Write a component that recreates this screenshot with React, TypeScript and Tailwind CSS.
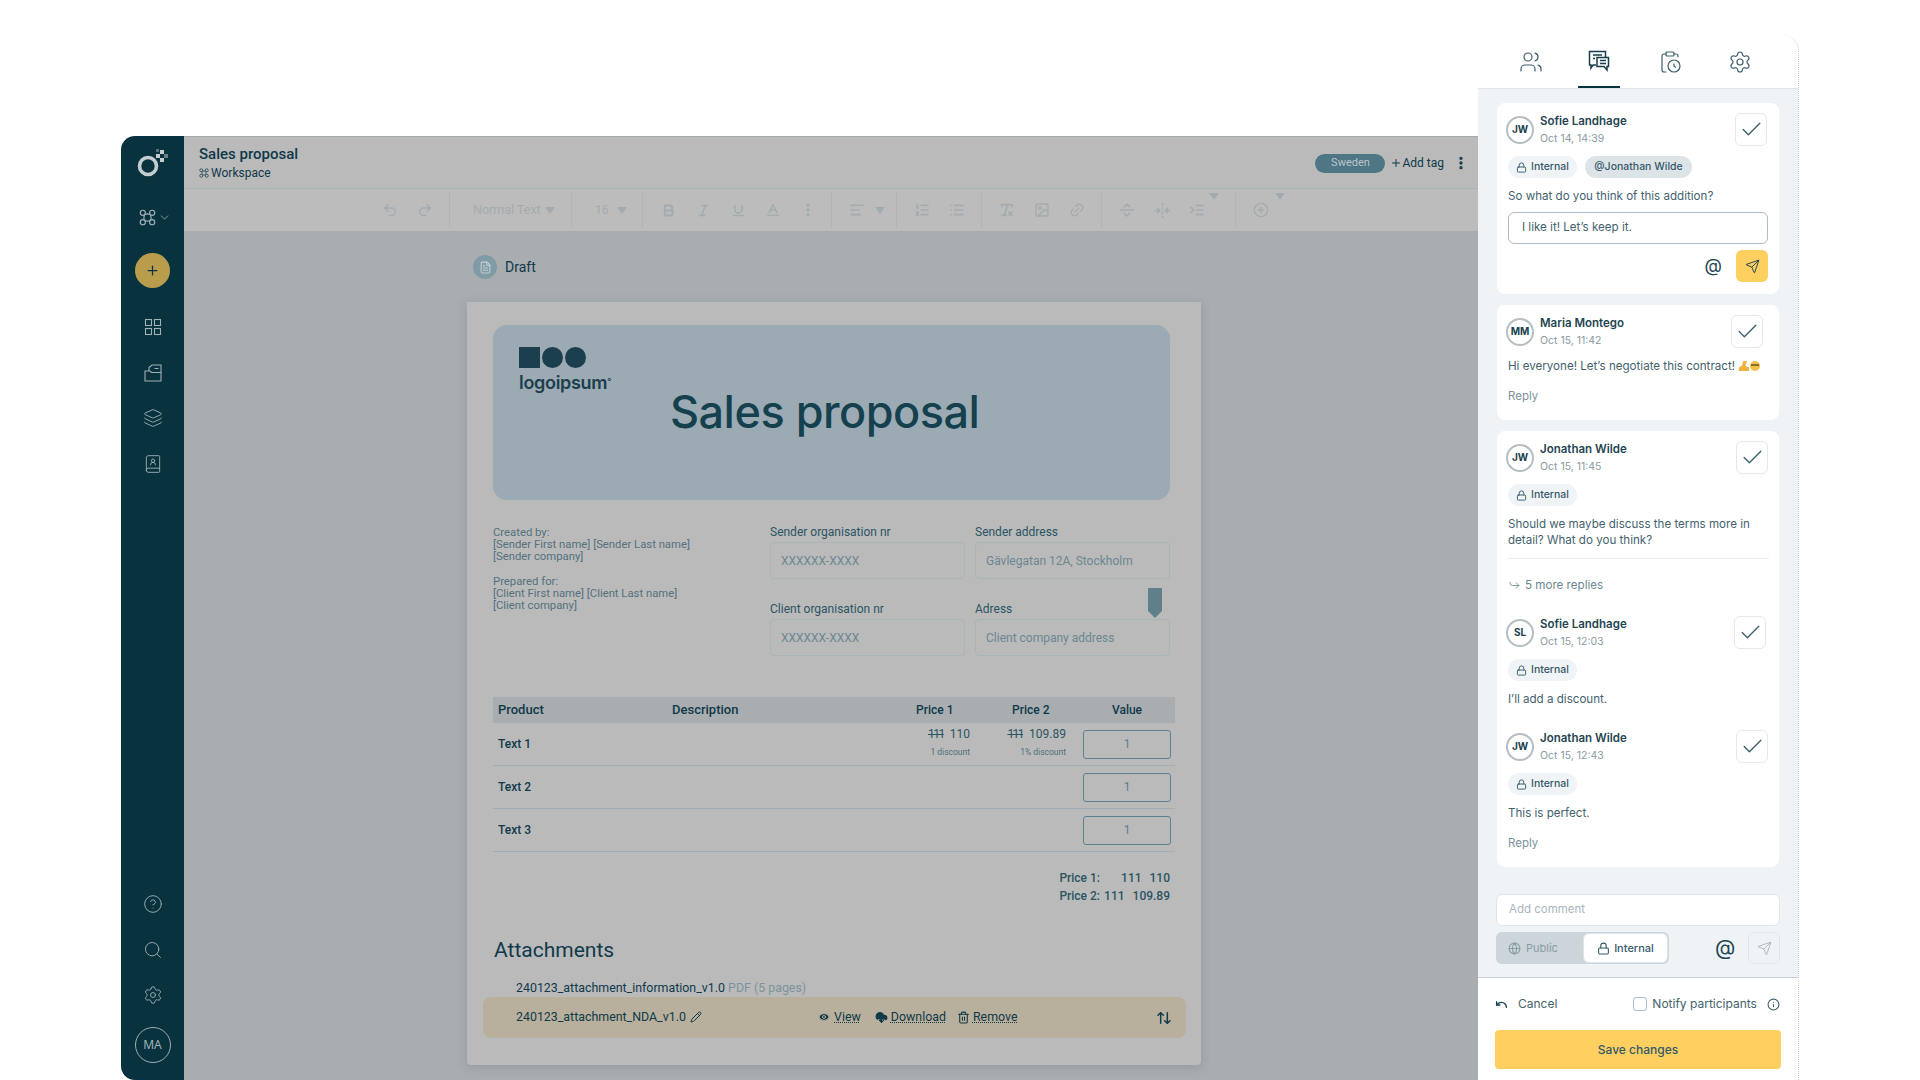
import type { ReactNode } from 'react'
import {
  AlignLeft, ArrowUpDown, Baseline, Bold, BookUser, Check, CircleHelp, CirclePlus, ClipboardClock,
  CloudDownload, ChevronDown, EllipsisVertical, Eye, FileText, FoldHorizontal, Forward,
  Globe, Image, IndentIncrease, Info, Italic, Layers, Link2, List, ListOrdered, Lock,
  Pencil, Plus, Redo2, RemoveFormatting, Search, Send, SeparatorHorizontal, Settings,
  Trash2, Underline, Undo, Undo2, Users,
} from 'lucide-react'

function WorkspaceIcon({ size, className }: { size: number; className?: string }) {
  return (
    <svg width={size} height={size} viewBox="0 0 20 20" fill="none" stroke="currentColor" strokeWidth="1.4" className={className}>
      <circle cx="4.5" cy="4.5" r="3" />
      <circle cx="15.5" cy="4.5" r="3" />
      <circle cx="4.5" cy="15.5" r="3" />
      <circle cx="15.5" cy="15.5" r="3" />
      <path d="M7 6.5q3-1.5 6 0M7 13.5q3 1.5 6 0M6.500 7q-1.500 3 0 6M13.500 7q1.500 3 0 6" />
    </svg>
  )
}

function AppLogo() {
  return (
    <svg width="32" height="28" viewBox="0 0 32 28" fill="none">
      <circle cx="11" cy="17" r="8.5" stroke="#c5cdd0" strokeWidth="3.6" />
      <g fill="#c5cdd0">
        <rect x="23" y="1" width="4" height="4" />
        <rect x="19" y="5" width="4" height="4" />
        <rect x="27" y="5" width="4" height="4" opacity="0.5" />
        <rect x="23" y="9" width="4" height="4" />
        <rect x="19" y="0" width="3" height="3" opacity="0.4" />
      </g>
    </svg>
  )
}

function GridIcon() {
  return (
    <svg width="20" height="20" viewBox="0 0 20 20" fill="none" stroke="currentColor" strokeWidth="1.1">
      <rect x="2.500" y="2.500" width="6" height="6" />
      <rect x="11.500" y="2.500" width="6" height="6" />
      <rect x="2.500" y="11.500" width="6" height="6" />
      <rect x="11.500" y="11.500" width="6" height="6" />
    </svg>
  )
}

function FolderFilesIcon() {
  return (
    <svg width="20" height="20" viewBox="0 0 20 20" fill="none" stroke="currentColor" strokeWidth="1.1">
      <path d="M2 18V8h5l1.500 1.500H18V18z" />
      <path d="M6 8V4.500L9 2h9v7.500M11.500 5.500h4" />
    </svg>
  )
}

function CommentsIcon() {
  return (
    <svg width="24" height="24" viewBox="0 0 24 24" fill="none" stroke="currentColor" strokeWidth="1.5">
      <path d="M9 16H6l-2 3v-3H2.500V2.500h16V8" />
      <path d="M10 8.500h11.500v9H20V21l-3-3.500h-7z" />
      <path d="M6 6h9M6 9.500h2M13 11.500h6M13 14.500h6" />
    </svg>
  )
}

function ToolIcon({ children }: { children: ReactNode }) {
  return <span className="flex w-[35px] justify-center text-[#a3abaf]">{children}</span>
}

function Caret() {
  return <span className="h-0 w-0 border-x-[5px] border-t-[7px] border-x-transparent border-t-[#a3abaf]" />
}

function ToolGroup({ className, children }: { className: string; children: ReactNode }) {
  return <div className={`flex h-[36px] items-center border-r border-[#aeb4b7] ${className}`}>{children}</div>
}

function Toolbar() {
  return (
    <div className="flex h-[42px] items-center bg-[#bcbcbc] pl-[188px]">
      <ToolGroup className="w-[78px] pl-[0.5px]">
        <ToolIcon><Undo2 size={16} /></ToolIcon>
        <ToolIcon><Redo2 size={16} /></ToolIcon>
      </ToolGroup>
      <ToolGroup className="w-[122px] pl-[23px]">
        <span className="w-[72px] text-[12.5px] text-[#a3abaf]">Normal Text</span>
        <Caret />
      </ToolGroup>
      <ToolGroup className="w-[71px] pl-[23px]">
        <span className="w-[22px] text-[12px] text-[#a3abaf]">16</span>
        <Caret />
      </ToolGroup>
      <ToolGroup className="w-[189px] pl-[7.5px]">
        <ToolIcon><Bold size={15} strokeWidth={3} /></ToolIcon>
        <ToolIcon><Italic size={15} strokeWidth={2.5} /></ToolIcon>
        <ToolIcon><Underline size={15} strokeWidth={2.5} /></ToolIcon>
        <ToolIcon><Baseline size={16} strokeWidth={2} /></ToolIcon>
        <ToolIcon><EllipsisVertical size={16} strokeWidth={3} /></ToolIcon>
      </ToolGroup>
      <ToolGroup className="w-[65px] pl-[7.5px]">
        <ToolIcon><AlignLeft size={16} strokeWidth={2.5} /></ToolIcon>
        <Caret />
      </ToolGroup>
      <ToolGroup className="w-[85px] pl-[7.5px]">
        <ToolIcon><ListOrdered size={16} strokeWidth={2.5} /></ToolIcon>
        <ToolIcon><List size={16} strokeWidth={2.5} /></ToolIcon>
      </ToolGroup>
      <ToolGroup className="w-[120px] pl-[7.5px]">
        <ToolIcon><RemoveFormatting size={16} strokeWidth={2.5} /></ToolIcon>
        <ToolIcon><Image size={16} /></ToolIcon>
        <ToolIcon><Link2 size={16} className="-rotate-45" /></ToolIcon>
      </ToolGroup>
      <ToolGroup className="w-[134px] pl-[7.5px]">
        <ToolIcon><SeparatorHorizontal size={18} /></ToolIcon>
        <ToolIcon><FoldHorizontal size={17} /></ToolIcon>
        <ToolIcon><IndentIncrease size={16} strokeWidth={2.5} /></ToolIcon>
        <span className="-ml-[6px]"><Caret /></span>
      </ToolGroup>
      <div className="flex items-center pl-[7.5px]">
        <ToolIcon><CirclePlus size={16} /></ToolIcon>
        <span className="-ml-[4px]"><Caret /></span>
      </div>
    </div>
  )
}

function Sidebar() {
  return (
    <aside className="flex w-[63px] shrink-0 flex-col items-center rounded-tl-[14px] rounded-bl-[14px] bg-[#09323f] pt-[13px] pb-[17px] text-[#9fb0b6]">
      <AppLogo />
      <div className="mt-[30px] flex h-[20px] items-center gap-[2px] pl-1">
        <WorkspaceIcon size={17} />
        <ChevronDown size={13} strokeWidth={1.5} />
      </div>
      <div className="mt-[26px] flex h-[35px] w-[35px] items-center justify-center rounded-full bg-[#b99d4d] text-[#09323f]">
        <Plus size={15} />
      </div>
      <div className="mt-[29px] flex flex-col gap-[25.5px]">
        <GridIcon />
        <FolderFilesIcon />
        <Layers size={20} strokeWidth={1.1} />
        <BookUser size={20} strokeWidth={1.1} />
      </div>
      <div className="mt-auto flex flex-col gap-[25.5px]">
        <CircleHelp size={20} strokeWidth={1.1} />
        <Search size={20} strokeWidth={1.1} />
        <Settings size={20} strokeWidth={1.1} />
      </div>
      <div className="mt-[22px] flex h-[36px] w-[36px] items-center justify-center rounded-full border border-[#9fb0b6] text-[12px]">MA</div>
    </aside>
  )
}

function Field({ label, value, children }: { label: string; value: string; children?: ReactNode }) {
  return (
    <div className="relative">
      <div className="text-[12px] leading-[14px] text-[#2b5563]">{label}</div>
      <div className="mt-[3px] flex h-[37px] items-center rounded-[4px] border border-[#a9b4b9] px-[10px] text-[12px] text-[#6c8792]">{value}</div>
      {children}
    </div>
  )
}

const rows = ['Text 1', 'Text 2', 'Text 3']
const gridCols = 'grid grid-cols-[179px_228px_75px_96px_104px] items-center'

function PriceCell({ value, note }: { value: string; note: string }) {
  return (
    <div className="pr-[5px] pb-[4px] text-right leading-[14px]">
      <div className="text-[12px] text-[#2b5563]"><span className="mr-[6px] tracking-[-1.5px] line-through">111</span>{value}</div>
      <div className="mt-[6px] text-[8.5px] leading-[10px] text-[#4f6f7b]">{note}</div>
    </div>
  )
}

function ProductTable() {
  return (
    <div className="mt-[41px] -mr-[5px] text-[12px] text-[#10394a]">
      <div className={`${gridCols} h-[26px] bg-[#a9adb0] font-medium`}>
        <span className="pl-[5px] text-[13px]">Product</span>
        <span className="text-[13px]">Description</span>
        <span className="pl-[16px]">Price 1</span>
        <span className="pl-[37px]">Price 2</span>
        <span className="ml-[12px] w-[88px] text-center">Value</span>
      </div>
      {rows.map((name, i) => (
        <div key={name} className={`${gridCols} h-[43px] border-b border-[#a0adb3]`}>
          <span className="pl-[5px] font-medium">{name}</span>
          <span />
          {i === 0 ? (
            <>
              <PriceCell value="110" note="1 discount" />
              <PriceCell value="109.89" note="1% discount" />
            </>
          ) : (
            <>
              <span />
              <span />
            </>
          )}
          <div className="ml-[12px] flex h-[29px] w-[88px] items-center justify-center rounded-[3px] border border-[#5f8290] text-[12px] text-[#5f7f8b]">1</div>
        </div>
      ))}
    </div>
  )
}

function Attachments() {
  return (
    <div>
      <h2 className="mt-[31px] ml-px text-[21px] leading-[28px] text-[#10394a]">Attachments</h2>
      <div className="mt-[15px] pl-[23px] text-[12.4px] leading-[18px] text-[#10394a]">
        240123_attachment_information_v1.0 <span className="text-[#7d939c]">PDF (5 pages)</span>
      </div>
      <div className="-mr-[16px] -ml-[10px] flex h-[41px] items-center rounded-[8px] bg-[#b8b09c] pr-[14px] pl-[33px] text-[12.4px] text-[#10394a]">
        <div className="flex w-[302px] items-center gap-[4px]">
          240123_attachment_NDA_v1.0
          <Pencil size={12} />
        </div>
        <div className="flex items-center gap-[14px]">
          <span className="flex items-center gap-[4px]"><Eye size={12} fill="currentColor" stroke="#b8b09c" /><span className="underline decoration-dotted">View</span></span>
          <span className="flex items-center gap-[3px]"><CloudDownload size={13} fill="currentColor" /><span className="underline decoration-dotted">Download</span></span>
          <span className="-ml-[3px] flex items-center gap-[3px]"><Trash2 size={13} /><span className="underline decoration-dotted">Remove</span></span>
        </div>
        <ArrowUpDown size={16} strokeWidth={2.2} className="ml-auto" />
      </div>
    </div>
  )
}

function Document() {
  return (
    <div className="mt-[23px] ml-[283px] h-[763px] w-[734px] rounded-b-[4px] bg-[#bababa] px-[26px] pt-[23px] pr-[31px] shadow-[0_2px_10px_rgba(80,95,105,0.25)]">
      <div className="flex h-[175px] items-start rounded-[14px] bg-[#9caab3] pl-[26px] text-[#15414f]">
        <div className="w-[98px] pt-[22px] font-['Inter',sans-serif]">
          <div className="flex">
            <span className="h-[21px] w-[21px] bg-[#1c3f4d]" />
            <span className="ml-[2px] h-[21px] w-[21px] rounded-full bg-[#1c3f4d]" />
            <span className="ml-[2px] h-[21px] w-[21px] rounded-full bg-[#1c3f4d]" />
          </div>
          <div className="mt-[4px] whitespace-nowrap text-[18px] leading-[22px] font-semibold tracking-[-0.3px] text-[#1c3f4d]">logoipsum<sup className="text-[9px]">°</sup></div>
        </div>
        <h1 className="ml-[53px] -translate-y-px self-center font-['Inter',sans-serif] text-[45px] leading-[56px] font-medium tracking-[-0.5px]">Sales proposal</h1>
      </div>

      <div className="mt-[25px] grid grid-cols-[267px_195px_195px] gap-x-[10px] gap-y-[23px]">
        <div className="row-span-2 text-[11.3px] leading-[12.2px] text-[#54717d]">
          <p className="pt-[2px]">Created by:<br />[Sender First name] [Sender Last name]<br />[Sender company]</p>
          <p className="mt-[12px]">Prepared for:<br />[Client First name] [Client Last name]<br />[Client company]</p>
        </div>
        <Field label="Sender organisation nr" value="XXXXXX-XXXX" />
        <Field label="Sender address" value="Gävlegatan 12A, Stockholm" />
        <div className="col-start-2"><Field label="Client organisation nr" value="XXXXXX-XXXX" /></div>
        <Field label="Adress" value="Client company address">
          <svg width="14" height="30" viewBox="0 0 14 30" className="absolute -top-[14px] left-[173px]">
            <path d="M1 0h12a1 1 0 0 1 1 1v22l-7 7-7-7V1a1 1 0 0 1 1-1z" fill="#5f7f8b" />
          </svg>
        </Field>
      </div>

      <ProductTable />

      <div className="mt-[17px] text-[12px] leading-[18px] font-medium text-[#2b5563]">
        <div className="flex justify-end"><span>Price 1:</span><span className="w-[70px] text-right"><span className="mr-[5px]">111</span> 110</span></div>
        <div className="flex justify-end"><span>Price 2:</span><span className="w-[70px] text-right"><span className="mr-[5px]">111</span> 109.89</span></div>
      </div>

      <Attachments />
    </div>
  )
}

function EditorWindow() {
  return (
    <div className="mt-[136px] ml-[121px] flex h-[944px] w-[1357px]">
      <Sidebar />
      <main className="flex min-w-0 flex-1 flex-col overflow-hidden border-t border-[#a3abaf] bg-[#a9adb0] font-['Roboto',sans-serif]">
        <header className="flex h-[52px] shrink-0 items-center border-b border-[#a8b3b8] bg-[#bababa] pr-[9px] pl-[15px] text-[#10394a]">
          <div>
            <div className="text-[15px] leading-[18px] font-medium">Sales proposal</div>
            <div className="mt-[2px] flex items-center gap-[2px] text-[12px] leading-[16px]">
              <WorkspaceIcon size={10} />
              Workspace
            </div>
          </div>
          <div className="mt-[1px] ml-auto flex h-[19px] w-[70px] items-center justify-center rounded-full bg-[#4f7684] text-[11px] text-[#b9c6ca]">Sweden</div>
          <div className="mt-[1px] ml-[5px] flex items-center text-[12px]"><Plus size={12} />Add tag</div>
          <EllipsisVertical size={16} strokeWidth={3} className="mt-[1px] ml-[9px]" />
        </header>
        <Toolbar />
        <div className="flex items-center gap-[8px] pt-[24px] pl-[289px] text-[14px] text-[#10394a]">
          <span className="flex h-[24px] w-[24px] items-center justify-center rounded-full bg-[#7f9ba5] text-[#c5cfd3]"><FileText size={13} /></span>
          Draft
        </div>
        <Document />
      </main>
    </div>
  )
}

function CheckBox({ className }: { className: string }) {
  return (
    <div className={`ml-auto flex h-[33px] w-[32px] shrink-0 items-center justify-center rounded-[6px] border border-[#e4e9ec] text-[#3d5f6b] ${className}`}>
      <Check size={25} strokeWidth={1.3} />
    </div>
  )
}

function CommentHead({ initials, name, date, checkClass, className }: { initials: string; name: string; date: string; checkClass: string; className?: string }) {
  return (
    <div className={`flex items-center pl-[9px] ${className ?? ''}`}>
      <div className="flex h-[28px] w-[28px] items-center justify-center rounded-full border-2 border-[#b5bfc3] text-[10px] font-bold text-[#173f4d]">{initials}</div>
      <div className="ml-[6px]">
        <div className="text-[11.5px] leading-[14px] font-semibold text-[#1f4552]">{name}</div>
        <div className="mt-[4px] text-[10.5px] leading-[14px] text-[#8a9aa2]">{date}</div>
      </div>
      <CheckBox className={checkClass} />
    </div>
  )
}

function InternalTag() {
  return (
    <span className="flex h-[22px] w-[69px] items-center justify-center gap-[4px] rounded-full bg-[#f0f4f6] text-[10.5px] font-medium text-[#35596a]">
      <Lock size={11} />
      Internal
    </span>
  )
}

function CardText({ className, children }: { className: string; children: ReactNode }) {
  return <p className={`pl-[11px] text-[11.6px] leading-[16px] text-[#44626e] ${className}`}>{children}</p>
}

function ReplyLink({ className }: { className: string }) {
  return <div className={`pl-[11px] text-[11.5px] leading-[16px] text-[#7d929b] ${className}`}>Reply</div>
}

function TagRow({ children }: { children?: ReactNode }) {
  return <div className="mt-[10px] flex gap-[8px] pl-[11px]"><InternalTag />{children}</div>
}

function CommentsPanel() {
  return (
    <aside className="absolute top-[35px] left-[1478px] flex h-[1045px] w-[321px] flex-col rounded-t-[16px] border-r border-dotted border-[#c7d0d4] bg-white font-['Inter',sans-serif]">
      <nav className="flex h-[53px] shrink-0 pt-px pl-[19px] text-[#3d5f6b]">
        <div className="flex w-[68px] items-center justify-center"><Users size={24} strokeWidth={1.2} /></div>
        <div className="flex w-[68px] justify-center">
          <div className="flex w-[42px] items-center justify-center border-b-2 border-[#09323f] text-[#173f4d]"><CommentsIcon /></div>
        </div>
        <div className="flex w-[74px] items-center justify-center"><ClipboardClock size={24} strokeWidth={1.2} /></div>
        <div className="flex w-[66px] items-center justify-center"><Settings size={24} strokeWidth={1.2} /></div>
      </nav>

      <div className="flex flex-1 flex-col border-t border-[#dfe6e9] bg-[#eff3f5] px-[19px] pt-[14px]">
        <section className="h-[191px] rounded-[8px] bg-white pt-[10px]">
          <CommentHead initials="JW" name="Sofie Landhage" date="Oct 14, 14:39" checkClass="mr-[12px]" />
          <TagRow>
            <span className="flex h-[22px] w-[107px] items-center justify-center rounded-full bg-[#dde4e8] text-[10.5px] font-medium text-[#35596a]">@Jonathan Wilde</span>
          </TagRow>
          <CardText className="mt-[10px]">So what do you think of this addition?</CardText>
          <div className="mt-[8px] ml-[11px] flex h-[32px] w-[260px] items-center rounded-[6px] border border-[#aebcc3] pl-[13px] text-[11.6px] text-[#44626e]">I like it! Let’s keep it.</div>
          <div className="mt-[6px] mr-[11px] flex items-center justify-end gap-[14px]">
            <span className="-translate-y-px text-[18px] text-[#1f4552]">@</span>
            <span className="flex h-[32px] w-[32px] items-center justify-center rounded-[6px] bg-[#ffd060] text-[#173f4d]"><Send size={15} strokeWidth={1.5} /></span>
          </div>
        </section>

        <section className="mt-[11px] h-[115px] rounded-[8px] bg-white pt-[10px]">
          <CommentHead initials="MM" name="Maria Montego" date="Oct 15, 11:42" checkClass="mr-[16px]" />
          <CardText className="mt-[10px] flex items-center gap-[3px]">
            Hi everyone! Let’s negotiate this contract!
            <svg width="22" height="12" viewBox="0 0 22 12">
              <path d="M1 11c-1-3 1-5 3-5l1-5h4l-1 3-1 1 2 2 2 0v4z" fill="#eeb23e" />
              <circle cx="17" cy="6" r="5" fill="#f3c04b" />
              <rect x="13" y="4" width="8" height="2" fill="#8a6d2a" />
            </svg>
          </CardText>
          <ReplyLink className="mt-[14px]" />
        </section>

        <section className="mt-[11px] h-[436px] rounded-[8px] bg-white pt-[10px]">
          <CommentHead initials="JW" name="Jonathan Wilde" date="Oct 15, 11:45" checkClass="mr-[11px]" />
          <TagRow />
          <CardText className="mt-[10px] pr-[16px]">Should we maybe discuss the terms more in detail? What do you think?</CardText>
          <div className="mt-[10px] mr-[10px] ml-[11px] border-t border-[#e8edf0]" />
          <div className="mt-[18px] flex items-center gap-[4px] pl-[11px] text-[11.6px] leading-[16px] text-[#6c8792]">
            <Forward size={13} strokeWidth={1.5} className="rotate-180 -scale-x-100" />
            5 more replies
          </div>
          <CommentHead initials="SL" name="Sofie Landhage" date="Oct 15, 12:03" checkClass="mr-[13px]" className="mt-[23px]" />
          <TagRow />
          <CardText className="mt-[10px]">I’ll add a discount.</CardText>
          <CommentHead initials="JW" name="Jonathan Wilde" date="Oct 15, 12:43" checkClass="mr-[11px]" className="mt-[23px]" />
          <TagRow />
          <CardText className="mt-[10px]">This is perfect.</CardText>
          <ReplyLink className="mt-[14px]" />
        </section>

        <div className="-mx-px mt-[27px] flex h-[32px] items-center rounded-[6px] border border-[#dfe6e9] bg-white pl-[12px] text-[11.5px] text-[#a9b7bd]">Add comment</div>
        <div className="-mx-px mt-[6px] flex items-center">
          <div className="flex h-[32px] w-[173px] items-center rounded-[6px] bg-[#ccd5da] text-[11px]">
            <span className="flex w-[87px] items-center gap-[5px] pl-[12px] text-[#8a9ca4]"><Globe size={13} />Public</span>
            <span className="flex h-[30px] w-[85px] items-center justify-center gap-[4px] rounded-[6px] border border-[#dfe6e9] bg-white font-medium text-[#35596a]"><Lock size={13} />Internal</span>
          </div>
          <span className="ml-[46px] text-[21px] leading-[32px] text-[#1f4552]">@</span>
          <span className="ml-auto flex h-[32px] w-[32px] items-center justify-center rounded-[6px] border border-[#dfe6e9] text-[#9fb0b6]"><Send size={15} strokeWidth={1.3} /></span>
        </div>
      </div>

      <footer className="h-[103px] shrink-0 border-t border-[#c7d0d4] px-[17px] pt-[17px] text-[12px] text-[#44626e]">
        <div className="flex h-[18px] items-center">
          <Undo size={13} strokeWidth={2.5} className="text-[#173f4d]" />
          <span className="ml-[10px]">Cancel</span>
          <span className="ml-[76px] h-[14px] w-[14px] rounded-[3px] border border-[#aebcc3]" />
          <span className="ml-[5px]">Notify participants</span>
          <Info size={13} className="mr-px ml-auto" />
        </div>
        <button className="mt-[17px] h-[39px] w-[286px] rounded-[4px] bg-[#ffd060] text-[12px] font-medium text-[#35596a]">Save changes</button>
      </footer>
    </aside>
  )
}

export default function App() {
  return (
    <div className="relative h-screen w-full overflow-hidden bg-white">
      <EditorWindow />
      <CommentsPanel />
    </div>
  )
}
